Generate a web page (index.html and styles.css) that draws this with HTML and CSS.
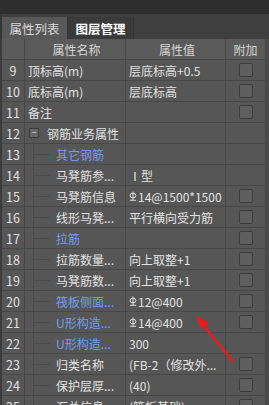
FILE: index.html
```html
<!DOCTYPE html>
<html lang="zh">
<head>
  <meta charset="UTF-8" />
  <title>属性列表</title>
  <link rel="stylesheet" href="styles.css">
</head>
<body>
  <div class="panel">
    <div class="topbar"></div>
    <div class="tabs">
      <div class="tab active">属性列表</div>
      <div class="tab">图层管理</div>
    </div>

    <div class="grid">
      <div class="row head">
        <div class="c idx"></div>
        <div class="c name center">属性名称</div>
        <div class="c val center">属性值</div>
        <div class="c add center">附加</div>
      </div>

      <div class="row"><div class="c idx">9</div><div class="c name">顶标高(m)</div><div class="c val">层底标高+0.5</div><div class="c add"><span class="chk"></span></div></div>
      <div class="row"><div class="c idx">10</div><div class="c name">底标高(m)</div><div class="c val">层底标高</div><div class="c add"><span class="chk"></span></div></div>
      <div class="row"><div class="c idx">11</div><div class="c name">备注</div><div class="c val"></div><div class="c add"><span class="chk"></span></div></div>
      <div class="row"><div class="c idx">12</div><div class="c name"><span class="fold">−</span>钢筋业务属性</div><div class="c val"></div><div class="c add"></div></div>
      <div class="row"><div class="c idx">13</div><div class="c name child blue">其它钢筋</div><div class="c val"></div><div class="c add"></div></div>
      <div class="row"><div class="c idx">14</div><div class="c name child">马凳筋参...</div><div class="c val">Ⅰ型</div><div class="c add"></div></div>
      <div class="row"><div class="c idx">15</div><div class="c name child">马凳筋信息</div><div class="c val"><svg class="rebar" viewBox="0 0 9 11"><ellipse cx="4.5" cy="5" rx="3.3" ry="2.6"/><path d="M4.5 0.5V10M1 10.3H8"/></svg>14@1500*1500</div><div class="c add"><span class="chk"></span></div></div>
      <div class="row"><div class="c idx">16</div><div class="c name child">线形马凳...</div><div class="c val">平行横向受力筋</div><div class="c add"><span class="chk"></span></div></div>
      <div class="row"><div class="c idx">17</div><div class="c name child blue">拉筋</div><div class="c val"></div><div class="c add"><span class="chk"></span></div></div>
      <div class="row"><div class="c idx">18</div><div class="c name child">拉筋数量...</div><div class="c val">向上取整+1</div><div class="c add"><span class="chk"></span></div></div>
      <div class="row"><div class="c idx">19</div><div class="c name child">马凳筋数...</div><div class="c val">向上取整+1</div><div class="c add"><span class="chk"></span></div></div>
      <div class="row"><div class="c idx">20</div><div class="c name child blue">筏板侧面...</div><div class="c val"><svg class="rebar" viewBox="0 0 9 11"><ellipse cx="4.5" cy="5" rx="3.3" ry="2.6"/><path d="M4.5 0.5V10M1 10.3H8"/></svg>12@400</div><div class="c add"><span class="chk"></span></div></div>
      <div class="row"><div class="c idx">21</div><div class="c name child blue">U形构造...</div><div class="c val"><svg class="rebar" viewBox="0 0 9 11"><ellipse cx="4.5" cy="5" rx="3.3" ry="2.6"/><path d="M4.5 0.5V10M1 10.3H8"/></svg>14@400</div><div class="c add"><span class="chk"></span></div></div>
      <div class="row"><div class="c idx">22</div><div class="c name child blue">U形构造...</div><div class="c val">300</div><div class="c add"></div></div>
      <div class="row"><div class="c idx">23</div><div class="c name child">归类名称</div><div class="c val">(FB-2（修改外...</div><div class="c add"><span class="chk"></span></div></div>
      <div class="row"><div class="c idx">24</div><div class="c name child">保护层厚...</div><div class="c val">(40)</div><div class="c add"><span class="chk"></span></div></div>
      <div class="row"><div class="c idx">25</div><div class="c name child">汇总信息</div><div class="c val">(筏板基础)</div><div class="c add"><span class="chk"></span></div></div>
    </div>

    <svg class="arrow" width="269" height="405" viewBox="0 0 269 405">
      <path d="M233 362L202 324" stroke="#f01818" stroke-width="2.2" fill="none"/>
      <path d="M196 316L209 323L201 329Z" fill="#f01818"/>
    </svg>
  </div>
</body>
</html>
```

FILE: styles.css
```css
body {
  margin: 0;
  background: #555;
  font-family: "Noto Sans CJK SC", "Noto Sans", sans-serif;
  font-size: 12px;
  color: #e2e2e2;
  overflow: hidden;
}
.panel {
  position: relative;
  width: 269px;
  height: 405px;
  overflow: hidden;
  background: #4a4a4a;
}
.topbar {
  height: 14px;
  background: #2e2e2e;
}
.tabs {
  display: flex;
  height: 25px;
  padding-top: 3px;
  box-sizing: border-box;
  background: #3f3f3f;
  border-left: 2px solid #363636;
}
.tab {
  width: 65px;
  display: flex;
  align-items: center;
  justify-content: center;
  font-size: 12.5px;
  color: #fff;
  font-weight: bold;
  background: #3a3a3a;
  border-right: 1px solid #333;
}
.tab.active {
  background: #585858;
  color: #d8d8d8;
  font-weight: normal;
}
.grid {
  border-left: 2px solid #3c3c3c;
  width: 264px;
  background: #565656;
}
.row {
  display: grid;
  grid-template-columns: 23px 101px 100px 40px;
  height: 21px;
}
.c {
  border-right: 1px solid #474747;
  border-bottom: 1px solid #474747;
  display: flex;
  align-items: center;
  white-space: nowrap;
  overflow: hidden;
  position: relative;
}
.head .c {
  background: #5a5a5a;
  color: #d6d6d6;
}
.center {
  justify-content: center;
}
.idx {
  justify-content: center;
  font-size: 12.5px;
  color: #e0e0e0;
}
.name {
  padding-left: 3px;
}
.val {
  padding-left: 3px;
}
.add {
  justify-content: center;
}
.chk {
  width: 12px;
  height: 12px;
  border: 1px solid #3c3c3c;
  border-radius: 2px;
  background: #5e5e5e;
}
.fold {
  width: 8px;
  height: 8px;
  border: 1px solid #3a3a3a;
  border-radius: 1px;
  background: #666;
  font-size: 9px;
  line-height: 8px;
  text-align: center;
  color: #ddd;
  margin: 0 8px 0 1px;
}
.child {
  padding-left: 31px;
}
.child::before {
  content: "";
  position: absolute;
  left: 8px;
  top: -1px;
  bottom: -1px;
  border-left: 1px solid #4b4b4b;
}
.child::after {
  content: "";
  position: absolute;
  left: 9px;
  top: 10px;
  width: 16px;
  border-top: 1px solid #4b4b4b;
}
.blue {
  color: #6f9ff0;
}
.rebar {
  width: 8px;
  height: 10px;
  margin-right: 1px;
  fill: none;
  stroke: #e2e2e2;
  stroke-width: 1.1;
}
.arrow {
  position: absolute;
  left: 0;
  top: 0;
  pointer-events: none;
}
```
